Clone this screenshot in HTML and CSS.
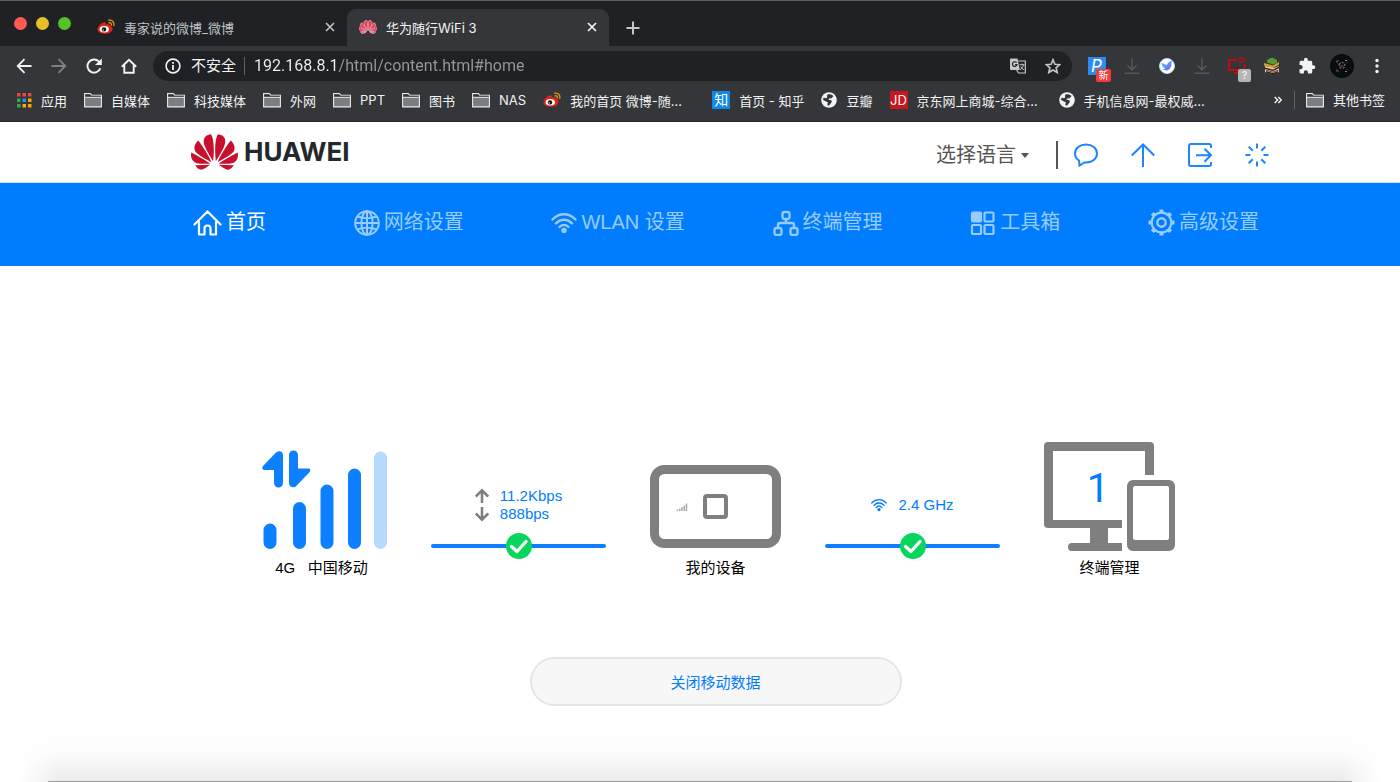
FILE: index.html
```html
<!DOCTYPE html>
<html lang="zh-CN">
<head>
  <meta charset="utf-8">
  <title>华为随行WiFi 3</title>
  <link rel="stylesheet" href="styles.css">
</head>
<body>
  <svg class="sprite" aria-hidden="true">
    <symbol id="flower" viewBox="0 2.9 24 18.2">
      <path d="M3.67 6.14S1.82 7.91 1.72 9.78v.35c.08 1.51 1.22 2.4 1.22 2.4 1.83 1.79 6.26 4.04 7.3 4.55 0 0 .06.03.1-.01l.02-.04v-.04C7.52 10.8 3.67 6.14 3.67 6.14zM9.65 18.6c-.02-.08-.1-.08-.1-.08l-7.38.26c.8 1.43 2.15 2.53 3.56 2.2.96-.25 3.16-1.78 3.88-2.3.06-.05.04-.09.04-.09zm.08-.78C6.49 15.63.21 12.28.21 12.28c-.15.46-.2.9-.21 1.3v.07c0 1.07.4 1.82.4 1.82.8 1.69 2.34 2.2 2.34 2.2.7.3 1.4.31 1.4.31.12.02 4.4 0 5.54 0 .05 0 .08-.05.08-.05v-.06c0-.03-.03-.05-.03-.05zM9.06 3.19a3.42 3.42 0 0 0-2.57 3.15v.41c.03.6.16 1.05.16 1.05.66 2.9 3.86 7.65 4.55 8.65.05.05.1.03.1.03a.1.1 0 0 0 .06-.1c1.06-10.6-1.11-13.42-1.11-13.42-.32.02-1.19.23-1.19.23zm8.3 2.27s-.49-1.8-2.44-2.28c0 0-.57-.14-1.17-.22 0 0-2.18 2.81-1.12 13.43.01.07.06.08.06.08.07.03.1-.03.1-.03.72-1.03 3.9-5.76 4.55-8.64 0 0 .36-1.4.02-2.34zm-2.92 13.07s-.07 0-.09.05c0 0-.01.07.03.1.7.51 2.85 2 3.88 2.3 0 0 .16.05.43.06h.14c.69-.02 1.9-.37 3-2.26l-7.4-.25zm7.83-8.41c.14-2.06-1.94-3.97-1.94-3.98 0 0-3.85 4.66-6.67 10.8 0 0-.03.08.02.13l.04.01h.06c1.06-.53 5.46-2.77 7.28-4.54 0 0 1.15-.93 1.21-2.42zm1.52 2.14s-6.28 3.37-9.52 5.55c0 0-.05.04-.03.11 0 0 .03.06.07.06 1.16 0 5.56 0 5.67-.02 0 0 .57-.02 1.27-.29 0 0 1.56-.5 2.37-2.27 0 0 .73-1.45.17-3.14z"/>
    </symbol>
    <symbol id="weibo" viewBox="0 0 18 18">
      <path fill="#e2231a" d="M6.500 4.500C8.500 3.900 9.300 5 8.800 6.600c2-.8 4.200-.6 4 1.200 2 .6 3 1.800 2.700 3.600-.5 2.700-4 4.300-7.700 4.300C3.500 15.700.5 14 .5 11.500c0-2.500 3-6.200 6-7z"/>
      <ellipse cx="7.300" cy="11.200" rx="4.600" ry="3.200" fill="#fff"/>
      <circle cx="7" cy="11.400" r="2.200" fill="#111"/>
      <circle cx="6.300" cy="11.900" r=".7" fill="#fff"/>
      <path fill="none" stroke="#e8920c" stroke-width="1.300" stroke-linecap="round" d="M11.500 2.200c3.400-.6 6 1.700 5.300 5.300M12 4.800c1.600-.3 2.700.7 2.300 2.300"/>
    </symbol>
    <symbol id="folder" viewBox="0 0 18 16">
      <path fill="#7c7d80" stroke="#e8eaed" stroke-width="1.100" d="M.6 14.900V1.600h5.700l1.400 1.600h9.700v11.700z"/>
      <path fill="#35363a" d="M1.200 2.200H6l1.300 1.600h9.500v1.200H1.200z"/>
      <path stroke="#e8eaed" d="M1 5.300h16"/>
    </symbol>
    <symbol id="globe" viewBox="0 0 16 16">
      <circle cx="8" cy="8" r="7.800" fill="#f1f3f4"/>
      <path fill="#35363a" d="M6.500 2.500c1.500-.6 4.500-.2 6 1.500-.3 1-1.300.9-1.500 1.700-.3 1-1.900.4-2.800.8C6.800 7.200 7.600 8.200 9 8c1.700 0 2 1 1.700 2.100-.4 1.300-1.600 1.500-1.900 2.700-.4 1.200-2.300.9-2.500-.4 0-1 1-1.300.4-2.200C5.500 9.500 3.500 9 2 7.800c.1-1 .4-1.600.8-2.200 1.500.8 2.700.9 3.200 0 .5-.8-.3-2.200.5-3.100z"/>
    </symbol>
    <symbol id="download" viewBox="0 0 16 18">
      <path fill="none" stroke="#57585b" stroke-width="1.500" d="M8 1.500v11M3.500 8.500 8 13l4.500-4.500M.5 16.200h15"/>
    </symbol>
    <symbol id="close" viewBox="0 0 10 10">
      <path fill="none" stroke="currentColor" stroke-width="1.700" d="m1 1 8 8M9 1 1 9"/>
    </symbol>
    <symbol id="wifi" viewBox="0 0 26 22">
      <path fill="none" stroke="currentColor" stroke-width="2.400" stroke-linecap="round" d="M1.500 7.500c6.500-7 16.500-7 23 0M5 11.300c4.600-4.800 11.400-4.800 16 0M8.500 15c2.700-2.700 6.300-2.700 9 0"/>
      <circle cx="13" cy="18.500" r="2.700" fill="currentColor"/>
    </symbol>
    <symbol id="link-ok" viewBox="0 0 175 28">
      <path stroke="#0d80ff" stroke-width="4" stroke-linecap="round" d="M2 14h171"/>
      <circle cx="88" cy="14" r="13" fill="#06d65b"/>
      <path fill="none" stroke="#fff" stroke-width="3.300" stroke-linecap="round" stroke-linejoin="round" d="m80.500 14.500 5.500 5 9-10"/>
    </symbol>
  </svg>

  <div class="tabstrip">
    <div class="lights">
      <span class="light red"></span>
      <span class="light yellow"></span>
      <span class="light green"></span>
    </div>
    <div class="tab">
      <svg class="favicon"><use href="#weibo"/></svg>
      <span class="tab-title">毒家说的微博_微博</span>
      <button class="tab-close" aria-label="关闭标签页"><svg width="10" height="10"><use href="#close"/></svg></button>
    </div>
    <div class="tab active">
      <svg class="favicon huawei"><use href="#flower"/></svg>
      <span class="tab-title">华为随行WiFi 3</span>
      <button class="tab-close" aria-label="关闭标签页"><svg width="10" height="10"><use href="#close"/></svg></button>
    </div>
    <button class="new-tab" aria-label="新标签页">
      <svg width="14" height="14" viewBox="0 0 14 14"><path stroke="#c4c7cb" stroke-width="2" d="M7 .5v13M.5 7h13"/></svg>
    </button>
  </div>

  <div class="toolbar">
    <button class="tool" aria-label="后退"><svg width="16" height="16" viewBox="0 0 16 16" fill="none" stroke="#f1f3f4" stroke-width="1.800"><path d="M15.500 8H2M8.500 1.200 1.700 8l6.800 6.800"/></svg></button>
    <button class="tool" aria-label="前进"><svg width="16" height="16" viewBox="0 0 16 16" fill="none" stroke="#808184" stroke-width="1.800"><path d="M.5 8H14M7.500 1.200 14.300 8l-6.800 6.800"/></svg></button>
    <button class="tool" aria-label="重新加载"><svg width="16" height="16" viewBox="0 0 16 16"><path fill="none" stroke="#f1f3f4" stroke-width="1.900" d="M14.300 10.300a6.600 6.600 0 1 1-1.500-6.900l1.200 1.300"/><path fill="#f1f3f4" d="M15.800.4v6.700H9z"/></svg></button>
    <button class="tool" aria-label="主页"><svg width="16" height="16" viewBox="0 0 16 16" fill="none" stroke="#f1f3f4" stroke-width="1.900"><path d="M.8 8.700 8 1.700l7.200 7M3.300 7v7.700h9.400V7"/></svg></button>
    <div class="omnibox">
      <svg width="16" height="16" viewBox="0 0 16 16"><circle cx="8" cy="8" r="6.900" fill="none" stroke="#f1f3f4" stroke-width="1.600"/><path stroke="#f1f3f4" stroke-width="1.800" d="M8 7v5M8 4v1.800"/></svg>
      <span class="insecure">不安全</span>
      <input class="url" type="text" aria-label="地址" value="192.168.8.1/html/content.html#home">
      <button class="tool" aria-label="翻译此页"><svg width="16" height="16" viewBox="0 0 16 16"><path fill="#c4c7cb" d="M1 .5h6.500L9.800 12H1a1 1 0 0 1-1-1V1.500a1 1 0 0 1 1-1z"/><path fill="none" stroke="#202124" stroke-width="1.200" d="M6.600 4.700A2.300 2.300 0 1 0 7 6.500H5"/><path fill="none" stroke="#c4c7cb" stroke-width="1.200" d="M8.300 3h7v12H8.600l-2-3"/><path fill="none" stroke="#c4c7cb" d="M9.500 6.700h5M12 5.500v1.200M13.500 7c-.5 2-1.800 3.800-3.300 4.800M10.700 8.500c.7 1.400 1.800 2.600 3.200 3.300"/></svg></button>
      <button class="tool" aria-label="为此标签页添加书签"><svg width="16" height="16" viewBox="0 0 16 16"><path fill="none" stroke="#c4c7cb" stroke-width="1.600" d="m8 1.700 1.900 4.500 4.900.4L11.100 9.800l1.100 4.700L8 12l-4.200 2.500 1.100-4.700L1.200 6.600l4.900-.4z"/></svg></button>
    </div>
    <div class="extensions">
      <button class="tool ext-p" aria-label="扩展程序 P">P<span class="badge badge-new">新</span></button>
      <button class="tool" aria-label="下载"><svg width="16" height="18"><use href="#download"/></svg></button>
      <button class="tool" aria-label="飞鸟"><svg width="16" height="16" viewBox="0 0 16 16"><defs><linearGradient id="bird" x2="1" y2="1"><stop offset="0" stop-color="#4ad7ff"/><stop offset="1" stop-color="#7a4ff0"/></linearGradient></defs><circle cx="8" cy="8" r="7.500" fill="#fff" stroke="#b9dcff"/><path fill="url(#bird)" d="M2.500 5c2 .3 3.700 1 5 2.300C9 4.500 10.800 3.200 13 2.500c-.3 1.500-.8 2-.6 3 .3 3.700-2 6.800-5 6.900-1.500 0-2.800-.5-3.600-1.200 1.200 0 2-.3 2.500-.8C4.200 9.800 3 7.800 2.500 5z"/></svg></button>
      <button class="tool" aria-label="下载"><svg width="16" height="18"><use href="#download"/></svg></button>
      <button class="tool" aria-label="投屏"><svg width="18" height="17" viewBox="0 0 18 17" fill="none" stroke="#c90a0a"><path stroke-width="1.800" d="M9 3H1v10h15.500V7M6 16h6"/><path stroke-width="1.200" d="M9.500 1.500c4-1.500 7.500-.5 8 3.500M11 4c2-.6 3.500 0 4 2"/><circle cx="12" cy="7" r=".6"/></svg><span class="badge badge-help">?</span></button>
      <button class="tool" aria-label="书籍"><svg width="18" height="18" viewBox="0 0 18 18"><path fill="#e8dcc0" d="m2 9 9 2 5-2v6l-7 2.500L2 15z"/><path fill="#5b9a32" d="m4 3 5-2.500L14 3v3l-4 1.500L4 5.500z"/><path fill="#d9a030" d="m1 6 9 2.500L16 5v2.500L10 11 1 8.500z"/><path fill="#2b2419" d="m2 10.500 8 2 6-3v1.800l-6 2.700-8-2zM3 14l7 2 5-2v1.500L9.500 18 3 15.500z"/><path fill="#a8462b" d="m3 12.500 7 2 5.500-2v1.200l-5.500 2-7-2z"/></svg></button>
      <button class="tool" aria-label="扩展程序"><svg width="18" height="18" viewBox="0 0 24 24"><path fill="#f1f3f4" d="M20.500 11H19V7a2 2 0 0 0-2-2h-4V3.500a2.500 2.500 0 0 0-5 0V5H4a2 2 0 0 0-2 2v3.800h1.500a2.700 2.700 0 0 1 0 5.400H2V20a2 2 0 0 0 2 2h3.800v-1.500a2.700 2.700 0 0 1 5.400 0V22H17a2 2 0 0 0 2-2v-4h1.500a2.500 2.500 0 0 0 0-5z"/></svg></button>
      <button class="tool" aria-label="用户"><svg width="24" height="24" viewBox="0 0 24 24"><circle cx="12" cy="12" r="12" fill="#090d10"/><path fill="none" stroke="#888" stroke-dasharray="2 1.500" d="M7 8.500V6.500h2M15 6.500h2v2M7 15.500v2h2M15 17.500h2v-2M9 10l3-2 3 2-1 4h-4z"/><path stroke="#c44" d="M10.500 12h3"/></svg></button>
      <button class="tool" aria-label="菜单"><svg width="4" height="16" viewBox="0 0 4 16" fill="#f1f3f4"><circle cx="2" cy="2.500" r="1.700"/><circle cx="2" cy="8" r="1.700"/><circle cx="2" cy="13.500" r="1.700"/></svg></button>
    </div>
  </div>

  <div class="bookmarks">
    <a href="#"><svg class="apps" viewBox="0 0 15 15"><path fill="#e8453c" d="M0 0h3.500v3.500H0zM5.500 0H9v3.500H5.500zM11 0h3.500v3.500H11z"/><path fill="#34a853" d="M0 5.500h3.500V9H0zM0 11h3.500v3.500H0z"/><path fill="#2a8cf4" d="M5.500 5.500H9V9H5.500z"/><path fill="#f9ab00" d="M11 5.500h3.500V9H11zM5.500 11H9v3.500H5.500zM11 11h3.500v3.500H11z"/></svg>应用</a>
    <a href="#"><svg class="folder"><use href="#folder"/></svg>自媒体</a>
    <a href="#"><svg class="folder"><use href="#folder"/></svg>科技媒体</a>
    <a href="#"><svg class="folder"><use href="#folder"/></svg>外网</a>
    <a href="#"><svg class="folder"><use href="#folder"/></svg>PPT</a>
    <a href="#"><svg class="folder"><use href="#folder"/></svg>图书</a>
    <a href="#"><svg class="folder"><use href="#folder"/></svg>NAS</a>
    <a href="#"><svg class="favicon"><use href="#weibo"/></svg><span class="long">我的首页 微博-随...</span></a>
    <a href="#"><span class="site zhihu">知</span>首页 - 知乎</a>
    <a href="#"><svg class="globe"><use href="#globe"/></svg>豆瓣</a>
    <a href="#"><span class="site jd">JD</span><span class="long">京东网上商城-综合...</span></a>
    <a href="#"><svg class="globe"><use href="#globe"/></svg><span class="long">手机信息网-最权威...</span></a>
    <div class="bookmarks-end">
      <button class="more" aria-label="更多书签"><svg width="8" height="8" viewBox="0 0 8 8"><path fill="none" stroke="#f1f3f4" stroke-width="1.400" d="m.7 1 3 3-3 3M4.300 1l3 3-3 3"/></svg></button>
      <a class="other" href="#"><svg class="folder"><use href="#folder"/></svg>其他书签</a>
    </div>
  </div>

  <div class="header">
    <div class="container">
      <a class="logo" href="#home"><svg width="47" height="36"><use href="#flower"/></svg>HUAWEI</a>
      <div class="header-tools">
        <label class="language">
          <select aria-label="选择语言"><option>选择语言</option></select>
          <svg width="10" height="5" viewBox="0 0 10 5"><path fill="#555" d="M1 0h8L5 5z"/></svg>
        </label>
        <a class="header-icon" href="#" aria-label="短信"><svg viewBox="0 0 24 24"><path d="M5 17.500C2.500 15.800 1 13.300 1 10.500 1 5.300 5.900 1.500 12 1.500s11 3.800 11 9-4.900 9-11 9l-1.500-.1L5.500 22.500z"/></svg></a>
        <a class="header-icon" href="#" aria-label="更新"><svg viewBox="0 0 24 24"><path d="M12 24V1.500M.8 12.500 12 1.500l11.200 11"/></svg></a>
        <a class="header-icon" href="#" aria-label="退出"><svg viewBox="0 0 24 24"><path d="M23 5V3a2 2 0 0 0-2-2H3a2 2 0 0 0-2 2v18a2 2 0 0 0 2 2h18a2 2 0 0 0 2-2v-2M8 12.200h15M16.500 5.700l6.500 6.500-6.500 6.500"/></svg></a>
        <a class="header-icon" href="#" aria-label="加载"><svg viewBox="0 0 24 24"><path d="M12 .5v5M12 18.500v5M.5 12h5M18.500 12h5M3.700 3.700l4 4M16.300 16.300l4 4M3.700 20.300l4-4M16.300 7.700l4-4"/></svg></a>
      </div>
    </div>
  </div>

  <div class="navbar">
    <div class="container">
      <a class="current" href="#home"><svg width="29" height="26" viewBox="0 0 29 26" fill="none" stroke="currentColor" stroke-width="2.200" stroke-linecap="round" stroke-linejoin="round"><path d="M1.500 14.500 14.500 1.500l13 13M6 12v12.500h5.500v-6a3 3 0 0 1 6 0v6H23V12"/></svg>首页</a>
      <a href="#"><svg width="26" height="26" viewBox="0 0 26 26" fill="none" stroke="currentColor" stroke-width="2"><circle cx="13" cy="13" r="11.800"/><ellipse cx="13" cy="13" rx="5.600" ry="11.800"/><path d="M13 1v24M1.200 13h23.600M3.500 6.500c5.500 2.200 13.500 2.200 19 0M3.500 19.500c5.500-2.200 13.500-2.200 19 0"/></svg>网络设置</a>
      <a href="#"><svg width="26" height="22"><use href="#wifi"/></svg>WLAN 设置</a>
      <a href="#"><svg width="26" height="26" viewBox="0 0 26 26" fill="none" stroke="currentColor" stroke-width="2.300"><rect x="9.500" y="2" width="7" height="7" rx="2"/><rect x="1.500" y="18" width="7" height="7" rx="2"/><rect x="17.500" y="18" width="7" height="7" rx="2"/><path d="M13 9v4M5 18v-3a2 2 0 0 1 2-2h12a2 2 0 0 1 2 2v3"/></svg>终端管理</a>
      <a href="#"><svg width="26" height="24" viewBox="0 0 26 24" fill="none" stroke="currentColor" stroke-width="2.200"><rect x="2" y="1.500" width="9" height="9" rx="1" fill="currentColor"/><rect x="14.500" y="1.500" width="9" height="9" rx="1"/><rect x="2" y="14" width="9" height="9" rx="1"/><rect x="14.500" y="14" width="9" height="9" rx="1"/></svg>工具箱</a>
      <a href="#"><svg width="27" height="27" viewBox="0 0 27 27" fill="none" stroke="currentColor"><circle cx="13.500" cy="13.500" r="9.800" stroke-width="2.200"/><circle cx="13.500" cy="13.500" r="4.200" stroke-width="2.400"/><path stroke-width="4" d="M13.500.5v3M13.500 23.500v3M.5 13.500h3M23.500 13.500h3M4.300 4.300l2.200 2.200M20.500 20.500l2.200 2.200M4.300 22.700l2.200-2.200M20.500 6.500l2.200-2.200"/></svg>高级设置</a>
    </div>
  </div>

  <div class="main">
    <div class="status">
      <div class="node">
        <svg viewBox="0 0 131 110">
          <g fill="none" stroke="#0d80ff" stroke-width="13" stroke-linecap="round"><path d="M14 89v12.500M43.500 67.500v34M71 50v51.500M98.500 34v67.500"/><path stroke="#b7d8ff" d="M124.500 17v84.500"/></g>
          <path fill="#0d80ff" d="M7.500 24.500 19.500 12c3-3.200 7.500-2 7.500 2v28a4.500 4.500 0 0 1-9 0V29H9c-3 0-3.500-2.500-1.500-4.500zM33 14a4.500 4.500 0 0 1 9 0v13.500h10c2.500 0 3 2 1.500 3.700L40.500 44.700C38 47.500 33 46.500 33 42z"/>
        </svg>
        <span class="node-name">4G &nbsp;&nbsp;中国移动</span>
      </div>
      <div class="link">
        <div class="link-info">
          <svg width="14" height="34" viewBox="0 0 14 34"><g fill="none" stroke="#7f7f7f" stroke-width="2.500"><path d="M7 15V2.500M.8 8.500 7 2.300l6.200 6.200M7 19v12.500M.8 25.500 7 31.700l6.200-6.200"/></g></svg>
          <span>11.2Kbps<br>888bps</span>
        </div>
        <svg class="link-line"><use href="#link-ok"/></svg>
      </div>
      <div class="node">
        <svg viewBox="0 0 131 110">
          <rect x="4.500" y="28.500" width="122" height="74" rx="10" fill="none" stroke="#7f7f7f" stroke-width="9"/>
          <rect x="55" y="55" width="21" height="21" rx="2" fill="none" stroke="#7f7f7f" stroke-width="4"/>
          <path stroke="#aaa" stroke-width="1.500" d="M27.500 70v-1.500M29.800 70v-2.500M32 70v-4M34.300 70v-5.500M36.500 70v-7.500"/>
        </svg>
        <span class="node-name">我的设备</span>
      </div>
      <div class="link">
        <div class="link-info">
          <svg width="16" height="14"><use href="#wifi"/></svg>
          <span>2.4 GHz</span>
        </div>
        <svg class="link-line"><use href="#link-ok"/></svg>
      </div>
      <div class="node">
        <svg viewBox="0 0 131 110">
          <path fill="#7f7f7f" fill-rule="evenodd" d="M4 1h102a4 4 0 0 1 4 4v29h-9V10H9v69h69v8H64v15h14v8H28a4 4 0 0 1 0-8h18V87H4a4 4 0 0 1-4-4V5a4 4 0 0 1 4-4z"/>
          <path fill="#7f7f7f" fill-rule="evenodd" d="M89 39h36a6 6 0 0 1 6 6v59a6 6 0 0 1-6 6H89a6 6 0 0 1-6-6V45a6 6 0 0 1 6-6zm2 6a2 2 0 0 0-2 2v50a2 2 0 0 0 2 2h32a2 2 0 0 0 2-2V47a2 2 0 0 0-2-2z"/>
          <text class="count" x="54" y="61">1</text>
        </svg>
        <span class="node-name">终端管理</span>
      </div>
    </div>
    <button class="data-button">关闭移动数据</button>
  </div>

  <div class="footer"></div>
</body>
</html>
```

FILE: styles.css
```css
* {
  box-sizing: border-box;
}

body {
  margin: 0;
  min-height: 100vh;
  display: flex;
  flex-direction: column;
  background: #fff;
  font-family: "Liberation Sans", "Noto Sans CJK SC", sans-serif;
  color: #000;
}

a {
  text-decoration: none;
}

button {
  border: none;
  background: none;
  padding: 0;
  font: inherit;
  cursor: pointer;
}

svg {
  flex: none;
  display: block;
}

.sprite {
  position: absolute;
  width: 0;
  height: 0;
}

/* browser bar */
.tabstrip,
.toolbar,
.bookmarks {
  display: flex;
  align-items: center;
  font-family: Inter, "Noto Sans CJK SC", sans-serif;
  font-size: 13px;
  color: #f1f3f4;
  background: #35363a;
}

.tabstrip {
  height: 46px;
  background: #202124;
  border-top: 1px solid #5c5d60;
}

.lights {
  display: flex;
  gap: 9px;
  padding: 0 14px;
}

.light {
  width: 13px;
  height: 13px;
  border-radius: 50%;
}

.red {
  background: #ff5a52;
}

.yellow {
  background: #e6c029;
}

.green {
  background: #53c22b;
}

.tab {
  display: flex;
  align-items: center;
  align-self: flex-end;
  width: 262px;
  height: 37px;
  padding: 0 12px 1px;
  color: #bdc1c6;
}

.tab.active {
  background: #35363a;
  border-radius: 9px 9px 0 0;
  color: #f1f3f4;
}

.tab-title {
  flex: 1;
  padding-left: 9px;
}

.favicon {
  width: 18px;
  height: 18px;
}

.huawei {
  height: 14px;
  fill: #e8405c;
  stroke: #f3a9b5;
}

.tab-close {
  color: inherit;
}

.new-tab {
  padding: 8px 17px 0;
}

.toolbar {
  height: 39px;
  padding: 0 6px;
}

.tool {
  position: relative;
  width: 35px;
  height: 28px;
  display: flex;
  align-items: center;
  justify-content: center;
}

.omnibox {
  flex: 1;
  display: flex;
  align-items: center;
  height: 30px;
  margin: 0 7px;
  padding: 0 2px 0 12px;
  border-radius: 15px;
  background: #202124;
}

.insecure {
  padding: 0 8px 0 10px;
  font-size: 15px;
  line-height: 18px;
  border-right: 1px solid #5f6368;
}

.url {
  flex: 1;
  min-width: 0;
  margin-left: 9px;
  padding: 0;
  border: none;
  outline: none;
  font-family: Roboto, sans-serif;
  font-size: 16px;
  color: transparent;
  /* host in white, path in grey */
  background: linear-gradient(90deg, #f1f3f4 85px, #96989b 85px);
  background-clip: text;
  -webkit-background-clip: text;
}

.extensions {
  display: flex;
}

.ext-p {
  color: #fff;
  font-size: 17px;
  font-style: italic;
  background: linear-gradient(#2a8cf0, #2a8cf0) center / 18px 18px no-repeat;
}

.badge {
  position: absolute;
  right: 3px;
  bottom: -2px;
  height: 13px;
  font-size: 10px;
  font-style: normal;
  line-height: 13px;
  border-radius: 2px;
  color: #fff;
}

.badge-new {
  width: 15px;
  background: #f23c3c;
}

.badge-help {
  width: 13px;
  background: #b5b5b5;
}

.bookmarks {
  height: 37px;
  padding: 0 15px 6px 17px;
  gap: 17px;
  white-space: nowrap;
  border-bottom: 1px solid #242528;
}

.bookmarks a {
  display: flex;
  align-items: center;
  gap: 9px;
  color: inherit;
}

.apps {
  width: 15px;
  height: 15px;
}

.folder {
  width: 18px;
  height: 16px;
}

.globe {
  width: 16px;
  height: 16px;
}

.site {
  width: 18px;
  height: 18px;
  text-align: center;
  line-height: 18px;
  color: #fff;
}

.zhihu {
  background: #0f88eb;
  font-size: 14px;
}

.jd {
  background: #c9151e;
}

.long {
  width: 125px;
}

.bookmarks-end {
  display: flex;
  align-items: center;
  margin-left: auto;
}

.more {
  padding-right: 12px;
}

.bookmarks .other {
  padding-left: 11px;
  line-height: 18px;
  border-left: 1px solid #5f6368;
}

/* page */
.container {
  display: flex;
  align-items: center;
  justify-content: space-between;
  max-width: 1140px;
  margin: 0 auto;
  padding-left: 61px;
}

.header {
  padding: 12px 0;
  border-bottom: 1px solid #d5e3ef;
}

.logo {
  display: flex;
  align-items: center;
  gap: 6px;
  font-family: Inter, sans-serif;
  font-weight: 700;
  font-size: 26px;
  line-height: 36px;
  color: #23282b;
}

.logo svg {
  fill: #c8102e;
}

.header-tools {
  display: flex;
  align-items: center;
  gap: 33px;
  padding: 6px 1px 0 0;
}

.language {
  display: flex;
  align-items: center;
  gap: 4px;
  padding-right: 26px;
  margin-right: -17px;
  border-right: 2px solid #555;
}

.language select {
  appearance: none;
  border: none;
  padding: 0;
  background: none;
  font-family: inherit;
  font-size: 20px;
  line-height: 28px;
  color: #555;
}

.header-icon svg {
  width: 24px;
  height: 24px;
  fill: none;
  stroke: #1a86ff;
  stroke-width: 2;
}

.navbar {
  padding: 25px 0 29px;
  background: #007dff;
}

.navbar .container {
  padding: 0 11px 0 63px;
}

.navbar a {
  display: flex;
  align-items: center;
  gap: 4px;
  font-size: 20px;
  line-height: 29px;
  color: #99cbff;
}

.navbar .current {
  color: #fff;
}

.main {
  display: flex;
  flex-direction: column;
  align-items: center;
  padding: 175px 0 0 31px;
}

.status {
  display: flex;
  align-items: flex-end;
  gap: 44px;
  font-size: 15px;
}

.node {
  display: flex;
  flex-direction: column;
  align-items: center;
  gap: 6px;
}

.node > svg {
  width: 131px;
  height: 110px;
}

.node-name {
  line-height: 22px;
}

.count {
  font-family: Roboto, sans-serif;
  font-size: 40px;
  text-anchor: middle;
  fill: #007dff;
}

.link {
  display: flex;
  flex-direction: column;
  align-items: center;
  gap: 9px;
  padding-bottom: 19px;
  color: #007dff;
}

.link-info {
  display: flex;
  align-items: center;
  gap: 11px;
  height: 36px;
  line-height: 18px;
}

.link-line {
  width: 175px;
  height: 28px;
}

.data-button {
  width: 372px;
  max-width: 100%;
  height: 49px;
  margin-top: 78px;
  border: 2px solid #e6e6e6;
  border-radius: 25px;
  background: #f7f7f7;
  font-size: 15px;
  color: #007dff;
}

.footer {
  display: flex;
  align-items: flex-end;
  height: 50px;
  margin-top: auto;
  background: linear-gradient(90deg, #fff 20px, transparent 60px calc(100% - 60px), #fff calc(100% - 20px)), linear-gradient(#fff, #fcfcfc 40%, #ebebeb);
}

.footer::after {
  content: "";
  flex: 1;
  height: 1px;
  margin: 0 48px;
  background: #9c9c9c;
}
```
